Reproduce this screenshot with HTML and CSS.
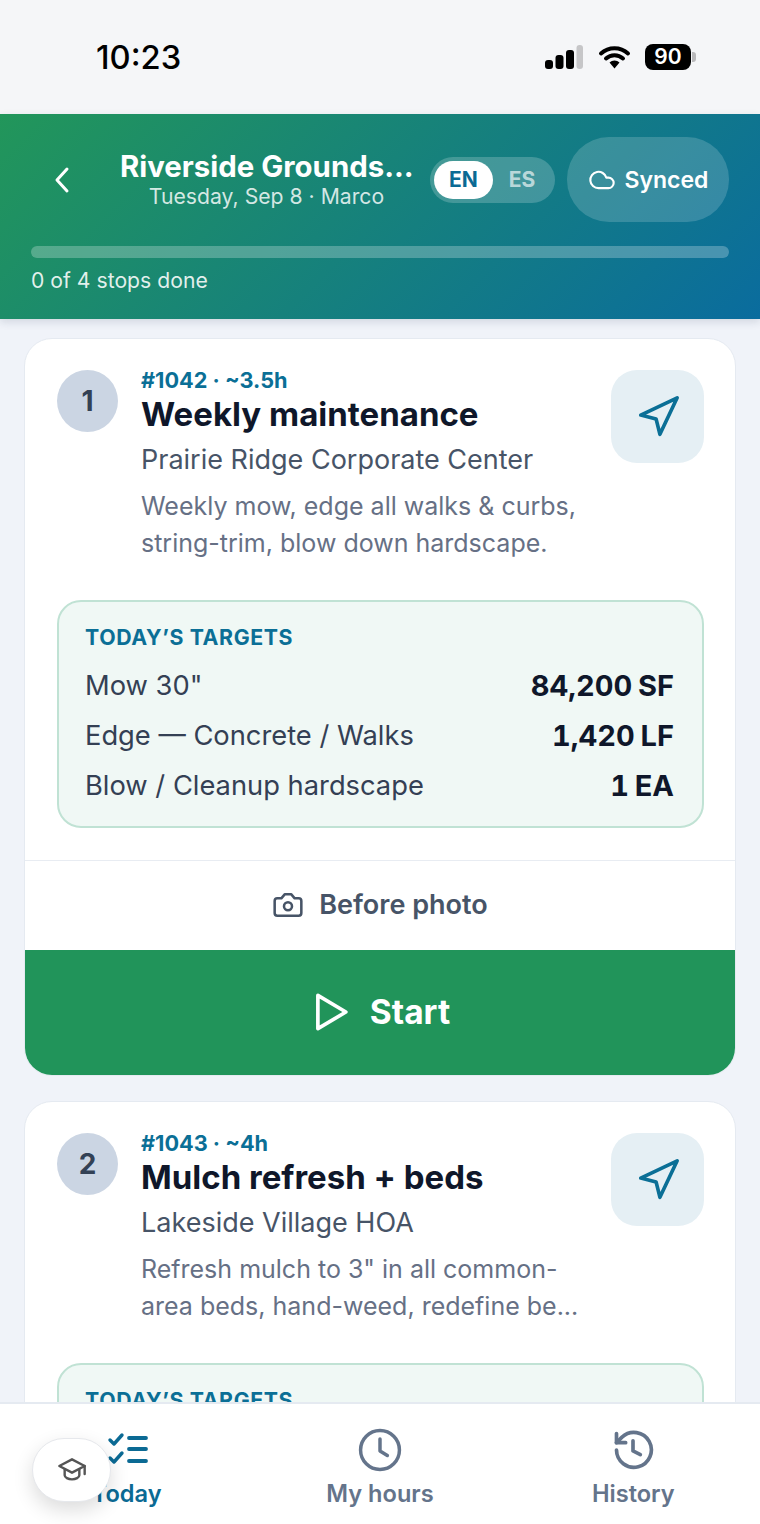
FILE: index.html
```html
<!DOCTYPE html>
<html lang="en">
<head>
<meta charset="utf-8">
<title>Today</title>
<link rel="stylesheet" href="styles.css">
</head>
<body>
<div class="app">
  <div class="status">
    <span class="time">10:23</span>
    <div class="status-icons">
      <svg class="signal" width="38" height="24" viewBox="0 0 38 24"><rect x="0" y="15" width="8" height="9" rx="3" fill="#000"/><rect x="10.500" y="10" width="8" height="14" rx="3" fill="#000"/><rect x="21" y="5" width="8" height="19" rx="3" fill="#000"/><rect x="31.500" y="0" width="6.500" height="24" rx="3" fill="#c6c6c8"/></svg>
      <svg class="wifi" width="33" height="24" viewBox="0 0 33 24"><path d="M3 8.500a20 20 0 0 1 27 0M8 13.500a12.500 12.500 0 0 1 17 0" fill="none" stroke="#000" stroke-width="4" stroke-linecap="round"/><path d="M11.500 17.500a7.500 7.500 0 0 1 10 0L16.500 23.500z" fill="#000"/></svg>
      <div class="battery"><span class="batt-body">90</span><span class="batt-tip"></span></div>
    </div>
  </div>

  <header class="hero">
    <div class="hero-row">
      <svg class="back" width="24" height="30" viewBox="0 0 24 30"><path d="M17 4 7 15l10 11" fill="none" stroke="#fff" stroke-width="3" stroke-linecap="round" stroke-linejoin="round"/></svg>
      <div class="hero-title">
        <div class="route">Riverside Grounds...</div>
        <div class="date">Tuesday, Sep 8 · Marco</div>
      </div>
      <div class="lang"><span class="lang-on">EN</span><span class="lang-off">ES</span></div>
      <div class="synced">
        <svg width="28" height="28" viewBox="0 0 24 24"><path d="M17.500 19H9a7 7 0 1 1 6.710-9h1.790a4.500 4.500 0 1 1 0 9z" fill="none" stroke="#fff" stroke-width="1.800" stroke-linejoin="round"/></svg>
        <span>Synced</span>
      </div>
    </div>
    <div class="progress"></div>
    <div class="stops">0 of 4 stops done</div>
  </header>

  <main class="list">
    <article class="card">
      <div class="card-head">
        <div class="num">1</div>
        <div class="info">
          <div class="meta">#1042 · ~3.5h</div>
          <h2 class="job">Weekly maintenance</h2>
          <div class="site">Prairie Ridge Corporate Center</div>
          <p class="desc">Weekly mow, edge all walks &amp; curbs, string-trim, blow down hardscape.</p>
        </div>
        <div class="nav-btn"><svg width="46" height="46" viewBox="0 0 24 24"><path d="M3 11 22 2l-9 19-2-8z" fill="none" stroke="#0b6f96" stroke-width="1.900" stroke-linejoin="round" stroke-linecap="round"/></svg></div>
      </div>
      <section class="targets">
        <div class="targets-label">TODAY’S TARGETS</div>
        <div class="target"><span>Mow 30"</span><b>84,200 SF</b></div>
        <div class="target"><span>Edge — Concrete / Walks</span><b>1,420 LF</b></div>
        <div class="target"><span>Blow / Cleanup hardscape</span><b>1 EA</b></div>
      </section>
      <div class="photo">
        <svg width="32" height="32" viewBox="0 0 24 24"><path d="M14.500 4h-5L7 7H4a2 2 0 0 0-2 2v9a2 2 0 0 0 2 2h16a2 2 0 0 0 2-2V9a2 2 0 0 0-2-2h-3z" fill="none" stroke="#475467" stroke-width="1.900" stroke-linejoin="round"/><circle cx="12" cy="13" r="3" fill="none" stroke="#475467" stroke-width="1.900"/></svg>
        <span>Before photo</span>
      </div>
      <div class="start">
        <svg width="42" height="42" viewBox="0 0 24 24"><path d="M4.500 2.500l16 9.500-16 9.500z" fill="none" stroke="#fff" stroke-width="2.100" stroke-linejoin="round"/></svg>
        <span>Start</span>
      </div>
    </article>

    <article class="card">
      <div class="card-head">
        <div class="num">2</div>
        <div class="info">
          <div class="meta">#1043 · ~4h</div>
          <h2 class="job">Mulch refresh + beds</h2>
          <div class="site">Lakeside Village HOA</div>
          <p class="desc">Refresh mulch to 3" in all common-<br>area beds, hand-weed, redefine be...</p>
        </div>
        <div class="nav-btn"><svg width="46" height="46" viewBox="0 0 24 24"><path d="M3 11 22 2l-9 19-2-8z" fill="none" stroke="#0b6f96" stroke-width="1.900" stroke-linejoin="round" stroke-linecap="round"/></svg></div>
      </div>
      <section class="targets">
        <div class="targets-label">TODAY’S TARGETS</div>
      </section>
    </article>
  </main>

  <nav class="tabs">
    <div class="tab tab-on">
      <svg width="48" height="44" viewBox="0 0 48 44"><path d="M7 12l4 4 8-9M7 30l4 4 8-9" fill="none" stroke="#0b6a94" stroke-width="3.400" stroke-linecap="round" stroke-linejoin="round"/><path d="M26 10h17M26 21h17M26 33h17" fill="none" stroke="#0b6a94" stroke-width="3.800" stroke-linecap="round"/></svg>
      <span>Today</span>
    </div>
    <div class="tab">
      <svg width="44" height="44" viewBox="0 0 24 24"><circle cx="12" cy="12" r="10.600" fill="none" stroke="#64748b" stroke-width="1.900"/><path d="M12 6v6.500l4 2.500" fill="none" stroke="#64748b" stroke-width="1.900" stroke-linecap="round" stroke-linejoin="round"/></svg>
      <span>My hours</span>
    </div>
    <div class="tab">
      <svg width="44" height="44" viewBox="0 0 24 24"><path d="M3 12a9.500 9.500 0 1 0 3-7L3 8" fill="none" stroke="#64748b" stroke-width="2" stroke-linecap="round" stroke-linejoin="round"/><path d="M3 3v5h5M12 7v5.500l4 2" fill="none" stroke="#64748b" stroke-width="2" stroke-linecap="round" stroke-linejoin="round"/></svg>
      <span>History</span>
    </div>
  </nav>

  <div class="learn">
    <svg width="32" height="32" viewBox="0 0 24 24"><path d="M12 4 2.500 9 12 14l9.500-5z" fill="none" stroke="#555" stroke-width="1.800" stroke-linejoin="round"/><path d="M6.500 11.500V16c0 1.600 2.600 3 5.500 3s5.500-1.400 5.500-3v-4.500M21.500 9v6" fill="none" stroke="#555" stroke-width="1.800" stroke-linecap="round" stroke-linejoin="round"/></svg>
  </div>
</div>
</body>
</html>
```

FILE: styles.css
```css
* { box-sizing: border-box; }
html, body { margin: 0; padding: 0; }
body { font-family: Inter, "Noto Sans", sans-serif; background: #f0f3f9; }
.app { position: relative; width: 760px; height: 1524px; display: flex; flex-direction: column; overflow: hidden; background: #f0f3f9; }

.status { height: 114px; flex: none; background: #f5f6f8; display: flex; align-items: center; justify-content: space-between; padding: 0 64px 1px 96px; }
.time { font-size: 32.700px; font-weight: 500; color: #000; }
.status-icons { display: flex; align-items: center; gap: 14.500px; }
.signal, .wifi { display: block; }
.battery { display: flex; align-items: center; gap: 1px; }
.batt-body { width: 46px; height: 26px; border-radius: 8px; background: #000; color: #fff; font-size: 21px; font-weight: 600; display: flex; align-items: center; justify-content: center; }
.batt-tip { width: 4px; height: 10px; background: #b9b9bb; border-radius: 0 3px 3px 0; }

.hero { height: 205px; flex: none; padding: 23px 31px 0; background: linear-gradient(135deg, #22965a 0%, #0a6c9e 100%); box-shadow: 0 3px 8px rgba(30, 50, 80, .14); color: #fff; position: relative; z-index: 1; }
.hero-row { display: flex; align-items: center; height: 85px; }
.back { flex: none; margin-left: 19px; }
.hero-title { width: 293px; margin-left: 46px; text-align: center; flex: none; white-space: nowrap; }
.route { font-size: 29.400px; font-weight: 700; line-height: 34px; }
.date { font-size: 21.200px; line-height: 26px; color: rgba(255, 255, 255, .82); margin-top: -1px; }
.lang { flex: none; width: 125px; height: 46px; margin-left: 17px; border-radius: 23px; background: rgba(255, 255, 255, .2); display: flex; align-items: center; padding: 3px 4px; }
.lang-on { width: 59px; height: 38px; border-radius: 19px; background: #fff; color: #0b6a94; font-size: 21px; font-weight: 700; display: flex; align-items: center; justify-content: center; }
.lang-off { flex: 1; text-align: center; font-size: 21px; font-weight: 700; color: rgba(255, 255, 255, .65); }
.synced { flex: none; width: 162px; height: 85px; margin-left: 12px; border-radius: 42px; background: rgba(255, 255, 255, .17); display: flex; align-items: center; justify-content: center; gap: 9px; font-size: 23px; font-weight: 600; }
.progress { height: 12px; margin-top: 24px; border-radius: 6px; background: rgba(255, 255, 255, .25); }
.stops { margin-top: 8px; font-size: 21.200px; line-height: 28px; color: rgba(255, 255, 255, .88); }

.list { flex: 1; min-height: 0; overflow: hidden; padding: 19px 24px 0; display: flex; flex-direction: column; gap: 25px; }
.card { flex: none; background: #fff; border: 1px solid #e5eaf1; border-radius: 28px; overflow: hidden; }
.card-head { display: flex; align-items: flex-start; padding: 31px 31px 0 32px; }
.num { flex: none; width: 61px; height: 62px; border-radius: 50%; background: #cbd5e3; color: #334155; font-size: 28px; font-weight: 700; display: flex; align-items: center; justify-content: center; }
.info { flex: 1; margin-left: 23px; min-width: 0; }
.meta { font-size: 21.700px; line-height: 22px; font-weight: 700; color: #0b6f96; margin-top: -1px; }
.job { margin: 0; font-size: 33px; line-height: 46px; font-weight: 700; color: #0f172a; }
.site { margin-top: 5px; font-size: 27px; line-height: 35px; color: #475467; }
.desc { margin: 11px 0 0; font-size: 25px; line-height: 37px; color: #667085; width: 445px; }
.nav-btn { flex: none; width: 93px; height: 93px; border-radius: 26px; background: #e5eff4; display: flex; align-items: center; justify-content: center; }
.targets { margin: 38px 31px 0 32px; border: 2px solid #c0e2d4; border-radius: 24px; background: #f0f8f5; padding: 22px 28px 16px 26px; }
.targets-label { font-size: 21.300px; line-height: 26px; font-weight: 700; letter-spacing: .6px; color: #0b6f96; margin-bottom: 10px; }
.target { display: flex; justify-content: space-between; align-items: center; height: 50px; font-size: 27.300px; color: #344054; }
.target b { font-size: 29px; font-weight: 700; color: #0f172a; font-variant-numeric: tabular-nums; word-spacing: -2px; }
.photo { margin-top: 32px; height: 90px; padding-bottom: 2px; border-top: 1px solid #e8ecf2; display: flex; align-items: center; justify-content: center; gap: 15px; font-size: 27px; font-weight: 600; color: #475467; }
.start { height: 125px; padding-bottom: 2px; background: #21945a; color: #fff; display: flex; align-items: center; justify-content: center; gap: 18px; font-size: 33.500px; font-weight: 700; }

.tabs { flex: none; height: 122px; background: #fff; border-top: 2px solid #e5eaf1; display: grid; grid-template-columns: repeat(3, 1fr); position: relative; z-index: 1; }
.tab { display: flex; flex-direction: column; align-items: center; justify-content: flex-start; padding-top: 24px; gap: 7px; font-size: 23.600px; font-weight: 600; color: #64748b; }
.tab svg { display: block; height: 44px; }
.tab-on { color: #0b6a94; }
.learn { position: absolute; left: 32px; top: 1438px; width: 79px; height: 64px; border-radius: 32px; background: #fff; border: 1px solid #e6e8ec; box-shadow: 0 8px 20px rgba(0, 0, 0, .14); display: flex; align-items: center; justify-content: center; z-index: 2; }
```
